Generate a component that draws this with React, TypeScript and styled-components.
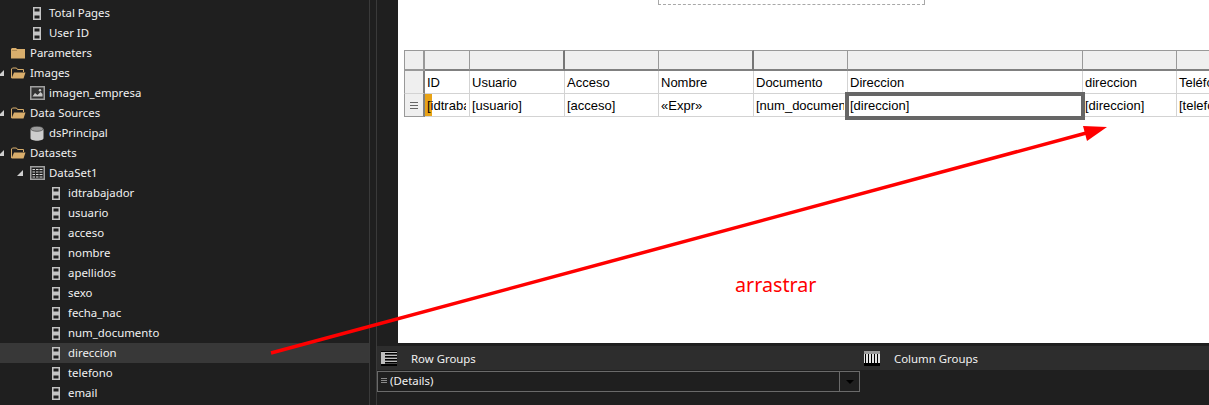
import React from "react";
import styled, { createGlobalStyle } from "styled-components";

const GlobalStyle = createGlobalStyle`
  html, body {
    margin: 0;
    padding: 0;
    width: 1209px;
    height: 405px;
    overflow: hidden;
    background: #1f1f1f;
  }
`;

type Row = { label: string; level: number; icon: "field" | "folder" | "open" | "image" | "db" | "table"; arrow?: boolean; active?: boolean };

const rows: Row[] = [
  { label: "Total Pages", level: 1, icon: "field" },
  { label: "User ID", level: 1, icon: "field" },
  { label: "Parameters", level: 0, icon: "folder" },
  { label: "Images", level: 0, icon: "open", arrow: true },
  { label: "imagen_empresa", level: 1, icon: "image" },
  { label: "Data Sources", level: 0, icon: "open", arrow: true },
  { label: "dsPrincipal", level: 1, icon: "db" },
  { label: "Datasets", level: 0, icon: "open", arrow: true },
  { label: "DataSet1", level: 1, icon: "table", arrow: true },
  { label: "idtrabajador", level: 2, icon: "field" },
  { label: "usuario", level: 2, icon: "field" },
  { label: "acceso", level: 2, icon: "field" },
  { label: "nombre", level: 2, icon: "field" },
  { label: "apellidos", level: 2, icon: "field" },
  { label: "sexo", level: 2, icon: "field" },
  { label: "fecha_nac", level: 2, icon: "field" },
  { label: "num_documento", level: 2, icon: "field" },
  { label: "direccion", level: 2, icon: "field", active: true },
  { label: "telefono", level: 2, icon: "field" },
  { label: "email", level: 2, icon: "field" },
];

const columns = [45, 95, 94, 95, 94, 235, 94, 94];
const heavyColumns = [1, 3];
const titles = ["ID", "Usuario", "Acceso", "Nombre", "Documento", "Direccion", "direccion", "Teléfono"];
const values = ["[idtrabajador]", "[usuario]", "[acceso]", "«Expr»", "[num_documento]", "[direccion]", "[direccion]", "[telefono]"];

function TreeIcon({ kind }: { kind: Row["icon"] }) {
  if (kind === "field") {
    return (
      <svg width="8" height="13" viewBox="0 0 8 13">
        <rect width="8" height="13" fill="#c4c4c4" />
        <rect x="1.5" y="1.5" width="5" height="3" fill="#1f1f1f" />
        <rect x="1.5" y="8.5" width="5" height="3" fill="#1f1f1f" />
      </svg>
    );
  }
  if (kind === "folder") {
    return (
      <svg width="14" height="12" viewBox="0 0 14 12">
        <path d="M0 2 L1 1 H5 L6 2 H14 V11.5 H0 Z" fill="#d9ae6c" />
        <rect x="1" y="3" width="5" height="1" fill="#b08a52" />
      </svg>
    );
  }
  if (kind === "open") {
    return (
      <svg width="15" height="12" viewBox="0 0 15 12">
        <path d="M0.5 11 V2 L1.5 1 H5.5 L6.5 2.5 H12.5 V5" fill="none" stroke="#d9ae6c" />
        <path d="M0.5 11.5 L3 5.5 H14.5 L12.5 11.5 Z" fill="#d9ae6c" />
      </svg>
    );
  }
  if (kind === "image") {
    return (
      <svg width="15" height="14" viewBox="0 0 15 14">
        <rect x="0.75" y="0.75" width="13.5" height="12.5" fill="#333" stroke="#a0a0a0" strokeWidth="1.5" />
        <path d="M2.5 10.5 L5 7 L7.5 9 L10.5 6 L12.5 8 V10.5 Z" fill="#c8c8c8" />
        <circle cx="10" cy="4.2" r="1.2" fill="#c8c8c8" />
      </svg>
    );
  }
  if (kind === "db") {
    return (
      <svg width="14" height="15" viewBox="0 0 14 15">
        <path d="M0.5 3 V12 C0.5 15.6 13.5 15.6 13.5 12 V3 Z" fill="#cdcdcd" />
        <ellipse cx="7" cy="2.8" rx="6.3" ry="2.5" fill="#9c9c9c" stroke="#333" strokeWidth="0.6" />
      </svg>
    );
  }
  return (
    <svg width="15" height="14" viewBox="0 0 15 14">
      <rect x="0.75" y="0.75" width="13.5" height="12.5" fill="#222" stroke="#a0a0a0" strokeWidth="1.5" />
      <path d="M2.5 3.5 H12.5 M2.5 6 H12.5 M2.5 8.5 H12.5 M2.5 11 H12.5" stroke="#d8d8d8" />
      <path d="M5.5 2 V12 M9 2 V12" stroke="#222" />
    </svg>
  );
}

export default function App() {
  return (
    <Window>
      <GlobalStyle />
      <Sidebar>
        {rows.map((r) => (
          <TreeRow key={r.label} $active={r.active}>
            <Indent $level={r.level}>{r.arrow && <Expander />}</Indent>
            <IconSlot>
              <TreeIcon kind={r.icon} />
            </IconSlot>
            <TreeLabel>{r.label}</TreeLabel>
          </TreeRow>
        ))}
      </Sidebar>
      <Splitter />
      <Workspace>
        <DesignArea>
          <Page>
            <TitleBox />
            <Tablix $cols={columns}>
              <Corner />
              {columns.map((_, i) => (
                <ColumnHandle key={i} $heavy={heavyColumns.includes(i)} />
              ))}
              <RowHandle />
              {titles.map((t) => (
                <Cell key={t}>{t}</Cell>
              ))}
              <RowHandle $details>
                <svg width="8" height="7" viewBox="0 0 8 7">
                  <path d="M0 .5 H8 M0 3.5 H8 M0 6.5 H8" stroke="#666" />
                </svg>
              </RowHandle>
              {values.map((v, i) => (
                <ValueCell key={i}>
                  {i === 0 && <RowMarker />}
                  <CellText>{v}</CellText>
                  {i === 5 && <Selection />}
                </ValueCell>
              ))}
            </Tablix>
          </Page>
        </DesignArea>
        <GroupPane>
          <GroupColumn>
            <GroupHeader>
              <svg width="16" height="15" viewBox="0 0 16 15">
                <rect width="16" height="15" fill="#000" />
                <rect x="0" y="1" width="16" height="12" fill="#bdbdbd" />
                <rect x="4" y="2" width="12" height="1.6" fill="#000" />
                <rect x="4" y="5" width="12" height="1.6" fill="#000" />
                <rect x="4" y="8" width="12" height="1.6" fill="#000" />
                <rect x="4" y="11" width="12" height="1.6" fill="#000" />
              </svg>
              <GroupTitle>Row Groups</GroupTitle>
            </GroupHeader>
            <GroupBox>
              <GroupBoxText>
                <svg width="6" height="5" viewBox="0 0 6 5">
                  <path d="M0 .5 H6 M0 2.5 H6 M0 4.5 H6" stroke="#8a8a8a" />
                </svg>
                (Details)
              </GroupBoxText>
              <GroupArrow />
            </GroupBox>
          </GroupColumn>
          <GroupColumn $wide>
            <GroupHeader>
              <svg width="16" height="15" viewBox="0 0 16 15">
                <rect width="16" height="15" fill="#000" />
                <rect x="0" y="0" width="16" height="3" fill="#9a9a9a" />
                <rect x="0" y="3" width="16" height="9" fill="#e4e4e4" />
                <path d="M1.5 3 V12 M4.5 3 V12 M7.5 3 V12 M10.5 3 V12 M13.5 3 V12" stroke="#000" />
              </svg>
              <GroupTitle>Column Groups</GroupTitle>
            </GroupHeader>
          </GroupColumn>
        </GroupPane>
      </Workspace>
      <Overlay width="1209" height="405" viewBox="0 0 1209 405">
        <line x1="271" y1="353" x2="1090" y2="132" stroke="#ff0000" strokeWidth="3.5" />
        <polygon points="1107,127 1083,126 1087,141" fill="#ff0000" />
      </Overlay>
      <Note>arrastrar</Note>
    </Window>
  );
}

const Window = styled.div`
  position: relative;
  display: flex;
  width: 1209px;
  height: 405px;
  overflow: hidden;
  background: #1f1f1f;
`;

const Sidebar = styled.div`
  width: 369px;
  flex: none;
  padding-top: 3px;
  box-sizing: border-box;
`;

const TreeRow = styled.div<{ $active?: boolean }>`
  display: flex;
  align-items: center;
  height: 20px;
  background: ${(p) => (p.$active ? "#383838" : "transparent")};
`;

const Indent = styled.div<{ $level: number }>`
  position: relative;
  width: ${(p) => 9 + p.$level * 19}px;
  height: 20px;
  flex: none;
`;

const Expander = styled.span`
  position: absolute;
  right: 5px;
  top: 7px;
  width: 0;
  height: 0;
  border-left: 6px solid transparent;
  border-bottom: 6px solid #cfcfcf;
`;

const IconSlot = styled.div`
  display: flex;
  justify-content: center;
  align-items: center;
  width: 18px;
  margin-right: 3px;
  flex: none;
`;

const TreeLabel = styled.span`
  font: 11.4px "Noto Sans", "Open Sans", sans-serif;
  color: #f1f1f1;
  white-space: nowrap;
  position: relative;
  top: -0.5px;
`;

const Splitter = styled.div`
  width: 6px;
  flex: none;
  border-left: 1px solid #3a3a3a;
  border-right: 1px solid #3a3a3a;
`;

const Workspace = styled.div`
  flex: 1;
  display: flex;
  flex-direction: column;
  min-width: 0;
`;

const DesignArea = styled.div`
  height: 343px;
  padding-left: 21px;
  flex: none;
`;

const Page = styled.div`
  height: 100%;
  background: #fff;
  padding: 0 0 0 6px;
  overflow: hidden;
`;

const TitleBox = styled.div`
  width: 267px;
  height: 5px;
  margin: 0 0 45px 254px;
  box-sizing: border-box;
  border: 1px dashed #a8a8a8;
  border-top: 0;
`;

const Tablix = styled.div<{ $cols: number[] }>`
  display: grid;
  grid-template-columns: 21px ${(p) => p.$cols.map((c) => `${c}px`).join(" ")};
  grid-template-rows: 21px 23px 23px;
  font: 13px "Liberation Sans", Arial, sans-serif;
  color: #000;
`;

const Corner = styled.div`
  background: #efefef;
  border: 1px solid #999;
  border-width: 1px 2px 2px 1px;
`;

const ColumnHandle = styled.div<{ $heavy?: boolean }>`
  background: #efefef;
  border-top: 1px solid #999;
  border-right: ${(p) => (p.$heavy ? "2px solid #777" : "1px solid #999")};
  border-bottom: 2px solid #808080;
`;

const RowHandle = styled.div<{ $details?: boolean }>`
  display: flex;
  align-items: center;
  justify-content: center;
  background: #efefef;
  border-left: 1px solid #999;
  border-right: 2px solid #808080;
  border-bottom: ${(p) => (p.$details ? "1px solid #999" : "1px solid #d3d3d3")};
`;

const Cell = styled.div`
  position: relative;
  display: flex;
  align-items: center;
  padding: 0 3px 0 2px;
  background: #fff;
  border-right: 1px solid #d3d3d3;
  border-bottom: 1px solid #d3d3d3;
  white-space: nowrap;
  min-width: 0;
`;

const ValueCell = styled(Cell)`
  padding-top: 1px;
`;

const CellText = styled.span`
  position: relative;
  display: block;
  overflow: hidden;
  width: 100%;
`;

const RowMarker = styled.span`
  position: absolute;
  left: 0;
  top: 0;
  bottom: 0;
  width: 7px;
  background: #e8a317;
`;

const Selection = styled.span`
  position: absolute;
  z-index: 1;
  left: -3px;
  right: -3px;
  top: -2px;
  bottom: -4px;
  border: 4px solid #666;
`;

const GroupPane = styled.div`
  flex: 1;
  display: flex;
  margin-top: 3px;
`;

const GroupColumn = styled.div<{ $wide?: boolean }>`
  display: flex;
  flex-direction: column;
  flex: ${(p) => (p.$wide ? "1" : "none")};
  width: ${(p) => (p.$wide ? "auto" : "483px")};
`;

const GroupHeader = styled.div`
  display: flex;
  align-items: center;
  gap: 14px;
  height: 24px;
  padding-left: 4px;
  background: #2d2d2d;
`;

const GroupTitle = styled.span`
  font: 11.4px "Noto Sans", "Open Sans", sans-serif;
  color: #f1f1f1;
`;

const GroupBox = styled.div`
  display: flex;
  justify-content: space-between;
  height: 21px;
  margin-top: 1px;
  box-sizing: border-box;
  border: 1px solid #6a6a6a;
`;

const GroupBoxText = styled.div`
  display: flex;
  align-items: center;
  gap: 3px;
  padding: 0 0 2px 3px;
  font: 11.4px "Noto Sans", "Open Sans", sans-serif;
  color: #f1f1f1;
`;

const GroupArrow = styled.div`
  position: relative;
  width: 19px;
  border-left: 1px solid #6a6a6a;

  &::after {
    content: "";
    position: absolute;
    left: 6px;
    top: 8px;
    border-left: 4px solid transparent;
    border-right: 4px solid transparent;
    border-top: 4px solid #000;
  }
`;

const Overlay = styled.svg`
  position: absolute;
  z-index: 2;
  left: 0;
  top: 0;
  pointer-events: none;
`;

const Note = styled.span`
  position: absolute;
  z-index: 2;
  left: 735px;
  top: 271px;
  font: 19.7px "Noto Sans", "Open Sans", sans-serif;
  color: #ff0000;
`;
